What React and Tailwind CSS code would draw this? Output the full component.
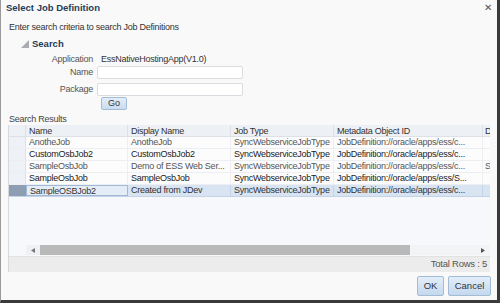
import React from "react";

const rows = [
  ["AnotheJob", "AnotheJob", "SyncWebserviceJobType", "JobDefinition://oracle/apps/ess/c...", "", false, "text-[#555]"],
  ["CustomOsbJob2", "CustomOsbJob2", "SyncWebserviceJobType", "JobDefinition://oracle/apps/ess/c...", "", false, "text-[#222]"],
  ["SampleOsbJob", "Demo of ESS Web Ser...", "SyncWebserviceJobType", "JobDefinition://oracle/apps/ess/c...", "S", false, "text-[#555]"],
  ["SampleOsbJob", "SampleOsbJob", "SyncWebserviceJobType", "JobDefinition://oracle/apps/ess/S...", "", false, "text-[#222]"],
  ["SampleOSBJob2", "Created from JDev", "SyncWebserviceJobType", "JobDefinition://oracle/apps/ess/c...", "", true, "text-[#333]"],
];

const cols = "grid grid-cols-[17px_102px_103px_103px_149px_1fr]";

export default function App() {
  return (
    <div
      className="w-[500px] h-[303px] bg-[#f9f9f9] border-l border-l-[#9a9a9a] border-r-[3px] border-r-[#3a3a3a] border-b-[3px] border-b-[#3a3a3a] flex flex-col text-[#333] overflow-hidden text-[9px] tracking-[-0.25px]"
      style={{ fontFamily: '"Liberation Sans", Arial, sans-serif' }}
    >
      {/* Title */}
      <div className="h-[15px] flex items-center justify-between pl-[5px] pr-[5px] pt-[1px]">
        <span className="text-[9.5px] font-bold text-[#1f3d58] leading-none tracking-normal">Select Job Definition</span>
        <span className="text-[10px] text-[#555] leading-none">✕</span>
      </div>
      <div className="mt-[6px] pl-[8px] leading-[12px] text-[#333]">
        Enter search criteria to search Job Definitions
      </div>

      {/* Search */}
      <div className="mt-[5px] pl-[20px] flex items-center gap-[2px] h-[12px]">
        <svg width="9" height="8" viewBox="0 0 9 8">
          <polygon points="8,0 8,8 0,8" fill="#a9adb3" />
        </svg>
        <span className="text-[9.5px] font-bold text-[#1f3d58] leading-none tracking-normal">Search</span>
      </div>

      <div className="mt-[3px] grid grid-cols-[92px_1fr] gap-x-[4px] items-center">
        <div className="text-right text-[#555] h-[12px] leading-[12px]">Application</div>
        <div className="h-[12px] leading-[12px] pl-[4px] text-[#333]">EssNativeHostingApp(V1.0)</div>
        <div className="text-right text-[#555] mt-[1px] h-[13px] leading-[13px]">Name</div>
        <div className="mt-[1px] w-[146px] h-[13px] bg-white border border-[#d9dde2] rounded-[2px]" />
        <div className="text-right text-[#555] mt-[4px] h-[13px] leading-[13px]">Package</div>
        <div className="mt-[4px] w-[146px] h-[13px] bg-white border border-[#d9dde2] rounded-[2px]" />
        <div />
        <div className="mt-[1px] pl-[4px] h-[13px]">
          <div className="w-[26px] h-[13px] flex items-center justify-center rounded-[2px] border border-[#a3bcd6] bg-gradient-to-b from-[#e3eefa] to-[#c9dcf0] text-[#333] tracking-normal">
            Go
          </div>
        </div>
      </div>

      <div className="mt-[3px] pl-[8px] h-[12px] leading-[12px] text-[#444]">Search Results</div>

      {/* Table */}
      <div className="ml-[7px] mr-[7px] border-l border-[#d5d9de] flex flex-col">
        <div className="h-[131px] bg-[#f6f8fb] flex flex-col overflow-hidden">
          <div className={`${cols} h-[12px] leading-[12px] bg-[#edf0f4] border-b border-[#dde1e6] text-[#333]`}>
            <div className="border-r border-[#dde1e6]" />
            <div className="pl-[3px] border-r border-[#dde1e6] whitespace-nowrap overflow-hidden">Name</div>
            <div className="pl-[3px] border-r border-[#dde1e6] whitespace-nowrap overflow-hidden">Display Name</div>
            <div className="pl-[3px] border-r border-[#dde1e6] whitespace-nowrap overflow-hidden">Job Type</div>
            <div className="pl-[3px] border-r border-[#dde1e6] whitespace-nowrap overflow-hidden">Metadata Object ID</div>
            <div className="pl-[2px] whitespace-nowrap overflow-hidden">D</div>
          </div>
          {rows.map((r, i) => (
            <div
              key={i}
              className={`${cols} h-[12px] leading-[11px] border-b ${r[5] ? "bg-[#d8e4f1] border-[#c4d4e6]" : "bg-[#fcfcfd] border-[#eceef1]"} ${r[6]}`}
            >
              <div className={r[5] ? "bg-[#8d9db2]" : "bg-[#eef1f5] border-r border-[#dde1e6]"} />
              <div className={`pl-[3px] whitespace-nowrap overflow-hidden ${r[5] ? "border border-[#9fb9d6] bg-[#e4edf7]" : "border-r border-[#eceef1]"}`}>{r[0]}</div>
              <div className={`pl-[3px] whitespace-nowrap overflow-hidden border-r ${r[5] ? "border-[#c4d4e6]" : "border-[#eceef1]"}`}>{r[1]}</div>
              <div className={`pl-[3px] whitespace-nowrap overflow-hidden border-r ${r[5] ? "border-[#c4d4e6]" : "border-[#eceef1]"}`}>{r[2]}</div>
              <div className={`pl-[3px] whitespace-nowrap overflow-hidden border-r ${r[5] ? "border-[#c4d4e6]" : "border-[#eceef1]"}`}>{r[3]}</div>
              <div className="pl-[2px] whitespace-nowrap overflow-hidden">{r[4]}</div>
            </div>
          ))}
          <div className="flex-1" />
          {/* Scrollbar */}
          <div className="h-[10px] flex ml-[17px] mb-[1px]">
            <div className="w-[14px] bg-[#eef0f3] flex items-center justify-center">
              <svg width="4" height="5" viewBox="0 0 4 5"><polygon points="4,0 4,5 0,2.5" fill="#777" /></svg>
            </div>
            <div className="w-[370px] bg-[#b9b9b9]" />
            <div className="flex-1 bg-[#f3f4f6] flex items-center justify-end pr-[5px]">
              <svg width="4" height="5" viewBox="0 0 4 5"><polygon points="0,0 0,5 4,2.5" fill="#555" /></svg>
            </div>
          </div>
        </div>
        <div className="h-[16px] bg-[#ececec] border-t border-[#e2e2e2] flex items-center justify-end pr-[3px] text-[#555] text-[9.5px]">
          Total Rows : 5
        </div>
      </div>

      {/* Buttons */}
      <div className="mt-[4px] flex justify-end gap-[4px] pr-[6px]">
        <div className="w-[27px] h-[20px] flex items-center justify-center rounded-[2px] border border-[#a3bcd6] bg-gradient-to-b from-[#e3eefa] to-[#c4d8ee] text-[9.5px] text-[#333] tracking-normal">OK</div>
        <div className="w-[43px] h-[20px] flex items-center justify-center rounded-[2px] border border-[#a3bcd6] bg-gradient-to-b from-[#e3eefa] to-[#c4d8ee] text-[9.5px] text-[#333] tracking-normal">Cancel</div>
      </div>
    </div>
  );
}
